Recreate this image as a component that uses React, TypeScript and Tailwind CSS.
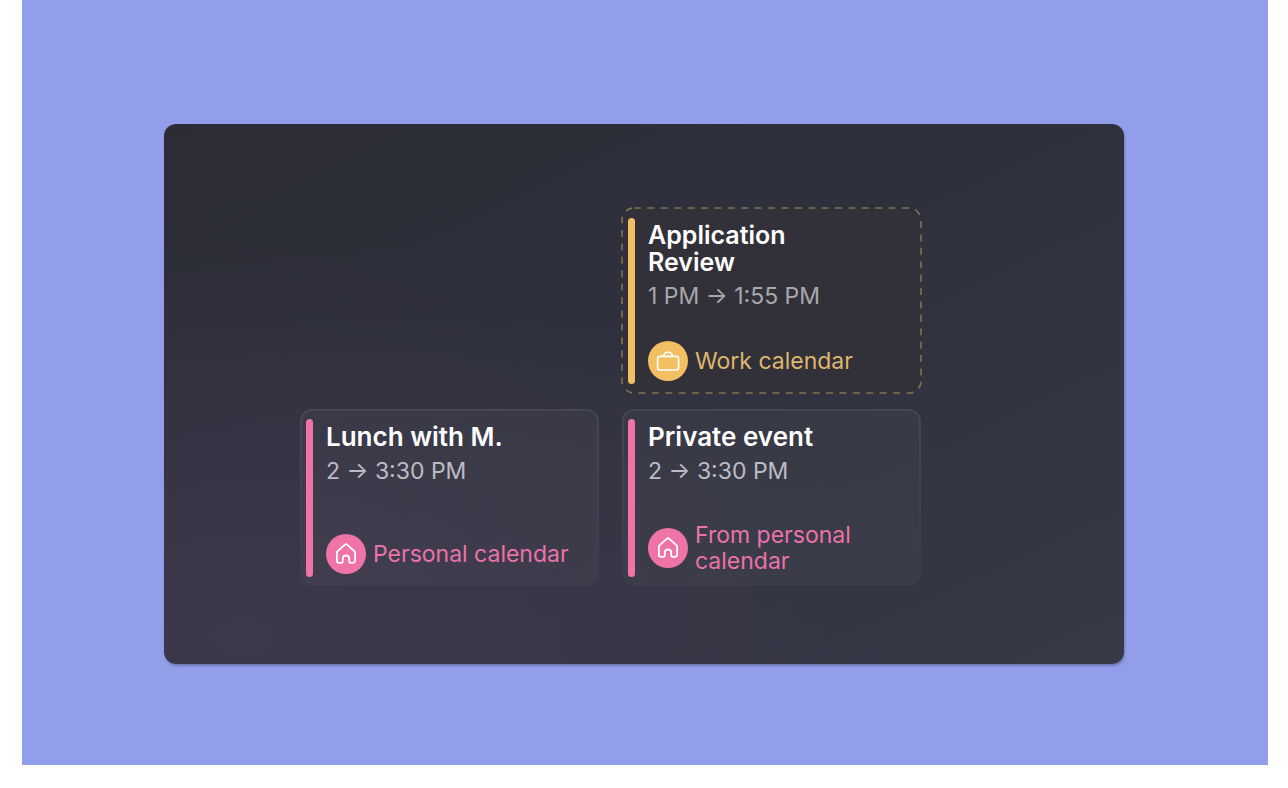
import React from 'react';

const HomeIcon = () => (
  <svg width="40" height="40" viewBox="0 0 40 40" fill="none" stroke="currentColor" strokeWidth="1.8" strokeLinecap="round" strokeLinejoin="round" aria-hidden="true">
    <path d="M18.7 10.9a1.9 1.9 0 0 1 2.6 0l7 6.2a2.3 2.3 0 0 1 .8 1.8v7.7a2.3 2.3 0 0 1-2.3 2.3h-2a1.6 1.6 0 0 1-1.6-1.6v-2.6a3.2 3.2 0 0 0-6.4 0v2.6a1.6 1.6 0 0 1-1.6 1.6h-2a2.3 2.3 0 0 1-2.3-2.3v-7.7a2.3 2.3 0 0 1 .8-1.8z" />
  </svg>
);

const BriefcaseIcon = () => (
  <svg width="40" height="40" viewBox="0 0 40 40" fill="none" stroke="currentColor" strokeWidth="1.6" strokeLinecap="round" aria-hidden="true">
    <rect x="9.6" y="15.4" width="21" height="13.6" rx="2.2" />
    <path d="M15.6 15.2c.3-2.5 2-3.9 4.4-3.9s4.1 1.4 4.4 3.9" />
  </svg>
);

type EventCardProps = {
  title: React.ReactNode;
  time: string;
  calendar: React.ReactNode;
  kind: 'work' | 'personal';
  className?: string;
};

const EventCard = ({ title, time, calendar, kind, className = '' }: EventCardProps) => {
  const work = kind === 'work';

  return (
    <article className={`relative flex rounded-xl pl-1.5 pr-4 pt-2.5 pb-[9px] ${work ? 'bg-[#32313a]' : 'bg-white/3'} ${className}`}>
      {/* Outline: dashed for work, fading towards the bottom for personal */}
      {work ? (
        <svg className="absolute inset-0 w-full h-full overflow-visible" fill="none" aria-hidden="true">
          <rect x="0" y="0" width="100%" height="100%" rx="12" stroke="#807250" strokeWidth="1.6" strokeDasharray="7 6.4" />
        </svg>
      ) : (
        <div className="absolute inset-0 rounded-xl border-2 border-white/7 mask-b-from-0% mask-b-to-90%" />
      )}

      <div className={`w-[7px] shrink-0 rounded-full ${work ? 'bg-[#f2c063]' : 'bg-[#f073a8]'}`} />

      <div className="flex flex-col flex-1 pl-[13px]">
        <h2 className={`font-semibold text-white pt-1 ${work ? 'text-[25px] leading-[27px]' : 'text-[26px] leading-7'}`}>{title}</h2>
        <p className={`text-[23px] leading-7 pt-1.5 ${work ? 'text-[#a8a7ac]' : 'text-[#bcbcc7]'}`}>{time}</p>
        <div className={`mt-auto flex items-center gap-[7px] pb-[3px] ${work ? 'text-[#dfb66c]' : 'text-[#ea73a8]'}`}>
          <span className={`shrink-0 rounded-full text-white ${work ? 'bg-[#f2c063]' : 'bg-[#f073a8]'}`}>
            {work ? <BriefcaseIcon /> : <HomeIcon />}
          </span>
          <span className="text-[23px] leading-[26px]">{calendar}</span>
        </div>
      </div>
    </article>
  );
};

const App = () => {
  return (
    <div className="bg-white pl-[22px] pr-5 pb-6 font-['Inter',sans-serif]">
      <main className="bg-[#929eea] pl-[142px] pr-36 pt-[124px] pb-[101px]">
        <section className="rounded-xl bg-[radial-gradient(ellipse_at_8%_95%,#3d384c_0%,transparent_55%),linear-gradient(155deg,#2b2c35_0%,#2e303c_40%,#373947_100%)] shadow-[1px_2px_2px_rgba(60,70,120,0.4)] pl-34 pr-[203px] pt-[84px] pb-[78px]">
          <div className="grid grid-cols-2 grid-rows-[185px_177px] gap-x-[23px] gap-y-4">
            <EventCard
              className="col-start-2"
              title={<>Application<br />Review</>}
              time="1 PM → 1:55 PM"
              calendar="Work calendar"
              kind="work"
            />
            <EventCard
              className="col-start-1"
              title="Lunch with M."
              time="2 → 3:30 PM"
              calendar="Personal calendar"
              kind="personal"
            />
            <EventCard
              title="Private event"
              time="2 → 3:30 PM"
              calendar={<>From personal<br />calendar</>}
              kind="personal"
            />
          </div>
        </section>
      </main>
    </div>
  );
};

export default App;
